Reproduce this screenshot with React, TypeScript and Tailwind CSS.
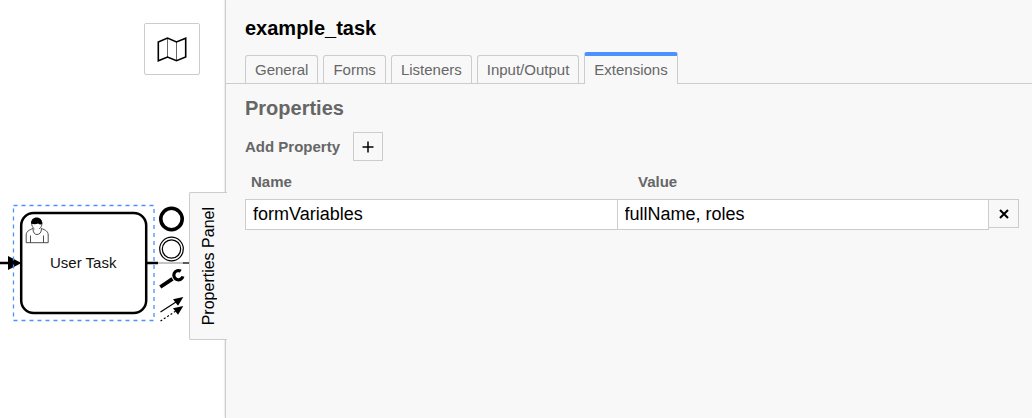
import { useState } from "react";

const tabs = ["General", "Forms", "Listeners", "Input/Output", "Extensions"];

function Diagram() {
  return (
    <svg className="absolute left-0 top-0" width="225" height="418" viewBox="0 0 225 418" aria-label="Process diagram">
      <path d="M0 263h10M147 263h11" stroke="#000" strokeWidth="2.4" />
      <path d="M158 263h26" stroke="#888" strokeWidth="1" />
      <path d="M183 263h7" stroke="#333" strokeWidth="1.6" />
      <rect x="21.2" y="213" width="125" height="100" rx="12.5" fill="#fff" stroke="#000" strokeWidth="2.5" />
      <path d="M8 256L21.500 263L8 270z" fill="#000" />
      <rect x="13.500" y="205.500" width="140.500" height="115" fill="none" stroke="#4d90ff" strokeWidth="1.300" strokeDasharray="4 4" />
      <g fill="none" stroke="#222" strokeWidth="0.800">
        <path d="M33 228.500c-4 1.500-6.800 3-6.800 6.500v7.700h22v-7.700c0-3.500-2.700-5-6.700-6.500c0 4-2 6-4.500 6s-4-2-4-6z" fill="#fff" />
        <path d="M30.500 235.500v7M43.500 235.500v7" />
        <path d="M34.500 229c-2-1.500-3-3.500-2.700-6c.4-2.500 2.200-4.500 5-4.500s4.900 2 5.100 4.500c.2 2.500-.9 4.500-2.700 6" fill="#fff" />
      </g>
      <path d="M31 223.500c0-3.800 2.300-6 5.600-6c3.500 0 5.900 2.400 5.600 6.600c-1.600.6-3 .3-4.100-.7c-2 1-4.400 1-7.100.1z" fill="#000" />
      <text x="50" y="268" fontSize="15" fontFamily="Liberation Sans, Arial, sans-serif" fill="#111">
        User Task
      </text>
    </svg>
  );
}

function ContextPad() {
  const button = "flex size-[30px] cursor-pointer items-center justify-center";
  return (
    <div className="absolute left-[156px] top-[204px] flex flex-col">
      <button className={button} aria-label="Append end event">
        <svg width="30" height="30" viewBox="0 0 30 30">
          <circle cx="15.500" cy="15" r="10.700" fill="#fff" stroke="#000" strokeWidth="3.600" />
        </svg>
      </button>
      <button className={button} aria-label="Append intermediate event">
        <svg width="30" height="30" viewBox="0 0 30 30" fill="none" stroke="#000" strokeWidth="1.200">
          <circle cx="15.500" cy="15" r="11.800" fill="#fff" />
          <circle cx="15.500" cy="15" r="9.200" />
        </svg>
      </button>
      <button className={button} aria-label="Change type">
        <svg width="30" height="30" viewBox="0 0 30 30" fill="none" stroke="#000">
          <path d="M4.300 23L16.500 14.800" strokeWidth="3.800" />
          <path d="M24.800 7.200A4.600 4.600 0 1 0 26.900 12.300" strokeWidth="3.200" />
        </svg>
      </button>
      <button className={button} aria-label="Connect">
        <svg width="30" height="30" viewBox="0 0 30 30" stroke="#000" strokeWidth="1.200">
          <path d="M4.500 18L20 8" />
          <path d="M4.500 27L20 17" strokeDasharray="2 2" />
          <path d="M27.300 3L22 11.800L17 5.200zM27.300 12L22 20.800L17 14.200z" stroke="none" />
        </svg>
      </button>
    </div>
  );
}

function MapButton() {
  return (
    <button
      aria-label="Toggle minimap"
      className="absolute left-[144px] top-[23px] flex h-[52px] w-14 cursor-pointer items-center justify-center rounded-[2px] border border-[#ccc] bg-white"
    >
      <svg width="30" height="28" viewBox="0 0 30 28" fill="none" stroke="#000">
        <path d="M10.500 3.500V22M19.500 7V26" stroke="#666" strokeWidth="1" />
        <path d="M1.300 7L10.500 3.100L19.500 7L28.700 3.300V22L19.500 25.700L10.500 22L1.300 25.700z" strokeWidth="1.600" />
      </svg>
    </button>
  );
}

export default function App() {
  const [active, setActive] = useState("Extensions");
  const inputStyle = "h-[31px] min-w-0 flex-1 border border-[#ccc] bg-white px-[7px] text-lg text-black outline-none focus:border-[#4d90ff]";

  return (
    <div className="flex min-h-screen bg-white font-['Liberation_Sans',Arial,sans-serif] text-[15px]">
      <main className="relative w-[225px] shrink-0">
        <Diagram />
        <ContextPad />
        <MapButton />
      </main>

      <aside className="relative min-w-0 flex-1 border-l border-[#ccc] bg-[#f8f8f8] shadow-[0_0_2px_#ccc]">
        <button className="absolute -left-[37px] top-[192px] flex h-[148px] w-[38px] cursor-pointer items-center justify-center rounded-l-[2px] border border-r-0 border-[#ccc] bg-[#f8f8f8] text-base text-black">
          <span className="rotate-180 [writing-mode:vertical-rl]">Properties Panel</span>
        </button>

        <h1 className="px-[19px] pt-4 text-xl leading-6 font-bold text-black">example_task</h1>

        <div role="tablist" className="mt-3 flex h-8 items-end gap-[5px] border-b border-[#ccc] px-[19px]">
          {tabs.map((tab) => (
            <button
              key={tab}
              role="tab"
              aria-selected={tab === active}
              onClick={() => setActive(tab)}
              className={
                tab === active
                  ? "-mb-px h-8 cursor-pointer rounded-t-[3px] border-x border-t-4 border-x-[#ccc] border-t-[#4d90ff] bg-[#f8f8f8] px-[9px] text-[#666]"
                  : "h-7 cursor-pointer rounded-t-[3px] border border-b-0 border-[#ccc] px-[9px] pt-0.5 text-[#666]"
              }
            >
              {tab}
            </button>
          ))}
        </div>

        <section className="pr-[13px] pl-[19px] text-[#666]">
          <h2 className="mt-3 text-xl leading-6 font-bold">Properties</h2>

          <div className="mt-3 flex items-center gap-[13px] font-bold">
            <label htmlFor="add-property" className="pt-0.5">
              Add Property
            </label>
            <button
              id="add-property"
              className="flex h-[29px] w-[30px] cursor-pointer items-center justify-center border border-[#ccc] text-black"
            >
              <svg width="12" height="12" viewBox="0 0 12 12" stroke="#000" strokeWidth="1.500" aria-label="Add">
                <path d="M6 .5v11M.5 6h11" />
              </svg>
            </button>
          </div>

          <div className="mt-[11px] grid grid-cols-2 leading-5 font-bold">
            <label htmlFor="property-name" className="px-1.5">
              Name
            </label>
            <label htmlFor="property-value" className="px-1.5">
              Value
            </label>
          </div>

          <div className="mt-[7px] flex items-start">
            <input id="property-name" className={inputStyle} defaultValue="formVariables" />
            <input id="property-value" className={`${inputStyle} -ml-px`} defaultValue="fullName, roles" />
            <button
              aria-label="Remove property"
              className="-ml-px flex h-[29px] w-[31px] cursor-pointer items-center justify-center border border-[#ccc]"
            >
              <svg width="10" height="10" viewBox="0 0 10 10" stroke="#000" strokeWidth="2">
                <path d="M1 1l8 8M9 1L1 9" />
              </svg>
            </button>
          </div>
        </section>
      </aside>
    </div>
  );
}
